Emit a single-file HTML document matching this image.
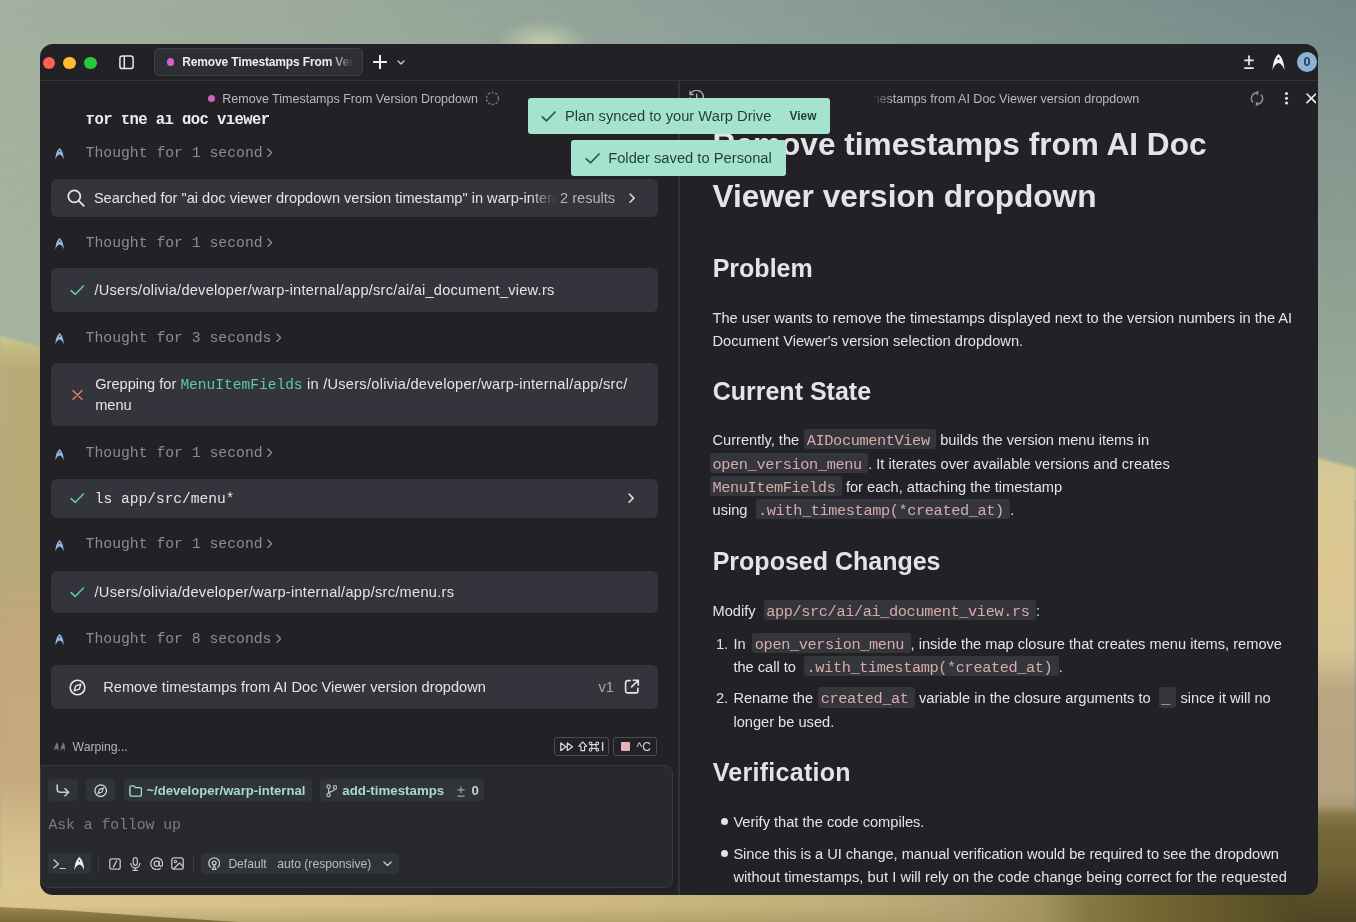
<!DOCTYPE html>
<html>
<head>
<meta charset="utf-8">
<title>Warp</title>
<style>
*{box-sizing:border-box;margin:0;padding:0}
html,body{width:1356px;height:922px;overflow:hidden;background:#9aa894}
body{font-family:"Liberation Sans",sans-serif;position:relative;color:#e4e4e7}
.abs{position:absolute}
.mono{font-family:"Liberation Mono",monospace}
/* ---------- wallpaper ---------- */
#wp{left:0;top:0;width:1356px;height:922px;overflow:hidden}
#wp div{position:absolute}
/* ---------- window ---------- */
#o{will-change:transform}
#win{left:40px;top:44px;width:1278px;height:851px;background:#212126;border-radius:13px;overflow:hidden}
.tl{width:12.5px;height:12.5px;border-radius:50%}
/* ---------- left pane ---------- */
.card{left:11px;width:607px;background:#34353c;border-radius:6px}
.thought{left:45px;font:14.75px "Liberation Mono",monospace;color:#8b8c90;white-space:pre;height:18px;line-height:18px}
.ct{font-size:14.6px;color:#e4e4e7;white-space:pre;line-height:21px}
/* ---------- right pane ---------- */
.h1{left:713px;font-weight:700;font-size:31.6px;color:#e3e3e8;white-space:pre;line-height:40px;height:40px}
.h2{left:712.7px;font-weight:700;font-size:25px;color:#e3e3e8;white-space:pre;line-height:30px;height:30px}
.p{left:712.5px;z-index:0;font-size:14.64px;color:#e4e4e7;white-space:pre;line-height:20px;height:20px}
.p.li{left:733.4px}
.bul{left:720.8px;width:7px;height:7px;border-radius:50%;background:#e4e4e7}
code{position:relative;font:15.3px "Liberation Mono",monospace;letter-spacing:-.4px;color:#d8abab;padding:0 6.4px 0 2.5px;margin-left:4px}
code::before{content:"";position:absolute;left:0;right:0;top:-3px;bottom:.9px;background:#35363c;border-radius:3px;z-index:-1}
code.s{margin-left:-2.5px}
.chip{background:#31333a;border-radius:4px}
.toast{background:#a6e3cf;border-radius:3px;height:35.5px;color:#1f3f38;font-size:14.75px;line-height:35.5px;white-space:pre}
</style>
</head>
<body>
<!-- WALLPAPER -->
<div id="wp" class="abs">
  <!-- sky -->
  <div style="left:0;top:0;width:1356px;height:922px;background:linear-gradient(90deg,#a2b19f 0,#9cab9b 300px,#8ea199 680px,#82968f 1000px,#74898a 1356px)"></div>
  <div style="left:0;top:0;width:1356px;height:500px;background:linear-gradient(180deg,rgba(180,192,160,0) 0,rgba(180,192,160,.08) 50px,rgba(180,192,160,.2) 100px,rgba(180,192,160,.62) 440px,rgba(180,192,160,.65) 500px);-webkit-mask-image:linear-gradient(90deg,rgba(0,0,0,.45) 0,#000 100%);mask-image:linear-gradient(90deg,rgba(0,0,0,.45) 0,#000 100%)"></div>
  <!-- cloud puff above window -->
  <div style="left:500px;top:20px;width:88px;height:34px;background:radial-gradient(ellipse at 48% 72%,rgba(203,208,172,.92) 0,rgba(190,199,168,.55) 38%,rgba(160,175,160,0) 72%)"></div>
  <!-- land -->
  <div style="left:-10px;top:0;width:1376px;height:940px;filter:blur(1.6px)"><div style="left:10px;top:0;width:1356px;height:940px;clip-path:polygon(0 336px,40px 347px,1318px 458px,1356px 468px,1356px 940px,0 940px)">
    <div style="left:0;top:0;width:700px;height:922px;background:linear-gradient(180deg,#cdc890 336px,#c2b880 350px,#b9ab78 370px,#b8aa78 560px,#c3a67b 640px,#c6a97d 780px,#d3bb88 830px,#dcc892 895px)"></div>
    <div style="left:700px;top:0;width:656px;height:922px;background:linear-gradient(180deg,#cfc795 455px,#d6c996 480px,#dcc690 560px,#d8c594 650px,#b9a784 690px,#b5a382 790px,#a89873 808px)"></div>
  </div>
  </div>
  <!-- bottom band -->
  <div style="left:0;top:890px;width:1356px;height:32px;background:linear-gradient(90deg,#dbc68e 0,#d4c088 300px,#cdb980 600px,#bfae78 850px,#b3a373 960px,#a4955f 1040px,#857840 1090px,#756833 1150px,#63572c 1230px,#554926 1300px,#5b502a 1356px)"></div>
  <div style="left:0;top:890px;width:1100px;height:32px;background:linear-gradient(180deg,rgba(150,135,80,0) 50%,rgba(150,135,80,.4) 100%);-webkit-mask-image:linear-gradient(90deg,#000 0,#000 800px,rgba(0,0,0,0) 1100px);mask-image:linear-gradient(90deg,#000 0,#000 800px,rgba(0,0,0,0) 1100px)"></div>
  <div style="left:-20px;top:902px;width:330px;height:30px;filter:blur(2.5px);clip-path:polygon(0 4px,80px 8px,180px 15px,290px 22px,290px 30px,0 30px);background:linear-gradient(180deg,#a08d57 4px,#84723f 14px,#776536 24px)"></div>
  <!-- shrubs on right -->
  <div style="left:1280px;top:806px;width:76px;height:116px;background:linear-gradient(180deg,rgba(138,123,73,0) 0,#85774a 9px,#75683a 24px,#6d6033 60px,#5d512a 87px,#4f4426 116px);-webkit-mask-image:linear-gradient(90deg,rgba(0,0,0,0) 0,#000 34px);mask-image:linear-gradient(90deg,rgba(0,0,0,0) 0,#000 34px)"></div>
</div>
</div>

<!-- WINDOW -->
<svg width="0" height="0" style="position:absolute">
  <defs>
    <symbol id="oz" viewBox="0 0 13 16.5"><path fill-rule="evenodd" d="M6.5 0C9.6 2.6 12.1 7.4 12.5 16.4C11.3 12.6 9.2 9.6 6.5 9.1C3.8 9.6 1.7 12.6 .5 16.4C.9 7.4 3.4 2.6 6.5 0ZM6.5 3.6a1.05 1.05 0 1 0 0 2.1a1.05 1.05 0 1 0 0-2.1Z"/></symbol>
    <symbol id="chk" viewBox="0 0 15 11"><path d="M1 6L5.2 10L14 1" fill="none" stroke-width="1.7" stroke-linecap="round" stroke-linejoin="round"/></symbol>
    <symbol id="chev" viewBox="0 0 6 10"><path d="M1 1L5 5L1 9" fill="none" stroke-width="1.5" stroke-linecap="round" stroke-linejoin="round"/></symbol>
    <symbol id="compass" viewBox="0 0 17 17"><circle cx="8.5" cy="8.5" r="7.3" fill="none" stroke-width="1.6"/><path d="M11.9 5.1L10.2 10.2L5.1 11.9L6.8 6.8Z" fill="none" stroke-width="1.4" stroke-linejoin="round"/></symbol>
  </defs>
</svg>
<div id="win" class="abs"><div id="o" class="abs" style="left:-40px;top:-44px;width:1356px;height:922px">
  <!-- title bar -->
  <div class="abs" style="left:40px;top:80px;width:1278px;height:1px;background:#34353a"></div>
  <div class="abs tl" style="left:42.5px;top:56.6px;background:#fe5f57"></div>
  <div class="abs tl" style="left:63.3px;top:56.6px;background:#febc2e"></div>
  <div class="abs tl" style="left:84.3px;top:56.6px;background:#28c840"></div>
  <svg class="abs" style="left:119px;top:55px" width="15" height="14.5" viewBox="0 0 15 14.5"><rect x=".9" y=".9" width="13.2" height="12.7" rx="2.4" fill="none" stroke="#e8e8ea" stroke-width="1.5"/><path d="M5.3 1V13.5" stroke="#e8e8ea" stroke-width="1.5"/></svg>
  <div class="abs" style="left:154px;top:48px;width:208.5px;height:27.5px;background:#2e2f34;border:1px solid #3f4046;border-radius:5px"></div>
  <div class="abs" style="left:166.5px;top:58.3px;width:7.4px;height:7.4px;border-radius:50%;background:#d264c1"></div>
  <div class="abs" style="left:182.3px;top:53px;width:172px;height:18px;overflow:hidden;white-space:pre;font-weight:700;font-size:12px;line-height:18px;letter-spacing:-.15px;color:#ededf0;-webkit-mask-image:linear-gradient(90deg,#000 0,#000 147px,rgba(0,0,0,.05) 170px);mask-image:linear-gradient(90deg,#000 0,#000 147px,rgba(0,0,0,.05) 170px)">Remove Timestamps From Version</div>
  <svg class="abs" style="left:373px;top:55px" width="14" height="14" viewBox="0 0 14 14"><path d="M7 .6V13.4M.6 7H13.4" stroke="#f0f0f2" stroke-width="2" stroke-linecap="round"/></svg>
  <svg class="abs" style="left:397px;top:59.5px" width="8" height="5" viewBox="0 0 8 5"><path d="M1 1L4 4L7 1" fill="none" stroke="#d0d0d4" stroke-width="1.3" stroke-linecap="round" stroke-linejoin="round"/></svg>
  <svg class="abs" style="left:1243.5px;top:54.5px" width="10" height="14.5" viewBox="0 0 10 14.5"><path d="M5 .5V10.3M.3 5.4H9.7M.3 13.2H9.7" stroke="#ececee" stroke-width="1.7"/></svg>
  <svg class="abs" style="left:1271.6px;top:53.8px;fill:#f4f4f6" width="13" height="16.5"><use href="#oz"/></svg>
  <div class="abs" style="left:1296.6px;top:51.7px;width:20.6px;height:20.6px;border-radius:50%;background:#8fb2d3;color:#1b3a5c;font-weight:700;font-size:12.6px;line-height:20.8px;text-align:center">0</div>

  <!-- LEFT PANE -->
  <div id="lp">
  <!-- pane header -->
  <div class="abs" style="left:208px;top:94.9px;width:7.4px;height:7.4px;border-radius:50%;background:#d264c1"></div>
  <div class="abs" id="lph" style="left:222.3px;top:89.5px;font-size:12.5px;line-height:18px;color:#b9b9bd;white-space:pre">Remove Timestamps From Version Dropdown</div>
  <svg class="abs" style="left:485px;top:91px" width="15" height="15" viewBox="0 0 15 15"><circle cx="7.5" cy="7.5" r="6" fill="none" stroke="#77787d" stroke-width="1.5" stroke-dasharray="2.2 1.6"/></svg>
  <!-- clipped bold line -->
  <div class="abs" style="left:80px;top:115.2px;width:300px;height:14px;overflow:hidden"><div class="abs mono" id="bold1" style="left:5.7px;top:-4.2px;font-size:15.6px;letter-spacing:-.6px;font-weight:700;line-height:18px;color:#ececef;white-space:pre">for the ai doc viewer</div></div>
  <svg class="abs" style="left:55.4px;top:148.4px;fill:#8fb6e6" width="9.2" height="11.7"><use href="#oz"/></svg>
  <div class="abs thought" id="t1" style="left:85.6px;top:143.90px">Thought for 1 second</div>
  <svg class="abs" style="left:266.8px;top:148.1px;stroke:#8b8c90" width="5.6" height="9.4"><use href="#chev"/></svg>
  <div class="abs card" style="left:51.3px;top:178.8px;width:606.7px;height:37.8px"></div>
  <svg class="abs" style="left:67.2px;top:188.7px" width="18" height="18" viewBox="0 0 18 18"><circle cx="7.3" cy="7.3" r="6" fill="none" stroke="#e6e6e9" stroke-width="1.7"/><path d="M11.8 11.8L16.8 16.8" stroke="#e6e6e9" stroke-width="1.8" stroke-linecap="round"/></svg>
  <div class="abs ct" id="s1" style="left:93.9px;top:187.70px;width:462px;overflow:hidden;-webkit-mask-image:linear-gradient(90deg,#000 0,#000 436px,rgba(0,0,0,0) 462px);mask-image:linear-gradient(90deg,#000 0,#000 436px,rgba(0,0,0,0) 462px)">Searched for "ai doc viewer dropdown version timestamp" in warp-internal</div>
  <div class="abs ct" id="s2" style="left:560px;top:187.70px;color:#b4b4b8">2 results</div>
  <svg class="abs" style="left:629.4px;top:193px;stroke:#d5d5d8" width="6.2" height="10.2"><use href="#chev"/></svg>
  <svg class="abs" style="left:55.4px;top:238.3px;fill:#8fb6e6" width="9.2" height="11.7"><use href="#oz"/></svg>
  <div class="abs thought" id="t2" style="left:85.6px;top:233.80px">Thought for 1 second</div>
  <svg class="abs" style="left:266.8px;top:238.0px;stroke:#8b8c90" width="5.6" height="9.4"><use href="#chev"/></svg>
  <div class="abs card" style="left:51.3px;top:268.3px;width:606.7px;height:43.4px"></div>
  <svg class="abs" style="left:69.8px;top:285px;stroke:#5fc9a0" width="14.6" height="10.4"><use href="#chk"/></svg>
  <div class="abs ct" id="f1" style="left:94.5px;top:279.70px;letter-spacing:.24px">/Users/olivia/developer/warp-internal/app/src/ai/ai_document_view.rs</div>
  <svg class="abs" style="left:55.4px;top:333.1px;fill:#8fb6e6" width="9.2" height="11.7"><use href="#oz"/></svg>
  <div class="abs thought" id="t3" style="left:85.6px;top:328.60px">Thought for 3 seconds</div>
  <svg class="abs" style="left:275.6px;top:332.8px;stroke:#8b8c90" width="5.6" height="9.4"><use href="#chev"/></svg>
  <div class="abs card" style="left:51.3px;top:363.3px;width:606.7px;height:63.2px"></div>
  <svg class="abs" style="left:72px;top:390.4px" width="11" height="10" viewBox="0 0 11 10"><path d="M1 .8L10 9.2M10 .8L1 9.2" stroke="#e27d6c" stroke-width="1.5" stroke-linecap="round"/></svg>
  <div class="abs ct" id="g1" style="left:95.2px;top:374.00px">Grepping for <span class="mono" id="g2" style="font-size:14.55px;color:#5fcaa0">MenuItemFields</span><span id="g3" style="letter-spacing:.27px"> in /Users/olivia/developer/warp-internal/app/src/</span></div>
  <div class="abs ct" id="g4" style="left:95.2px;top:395.30px">menu</div>
  <svg class="abs" style="left:55.4px;top:448.5px;fill:#8fb6e6" width="9.2" height="11.7"><use href="#oz"/></svg>
  <div class="abs thought" id="t4" style="left:85.6px;top:444.00px">Thought for 1 second</div>
  <svg class="abs" style="left:266.8px;top:448.2px;stroke:#8b8c90" width="5.6" height="9.4"><use href="#chev"/></svg>
  <div class="abs card" style="left:51.3px;top:478.6px;width:606.7px;height:39.4px"></div>
  <svg class="abs" style="left:69.8px;top:493.2px;stroke:#5fc9a0" width="14.6" height="10.4"><use href="#chk"/></svg>
  <div class="abs mono" id="ls" style="left:94.8px;top:490.4px;font-size:14.55px;line-height:18px;color:#e4e4e7;white-space:pre">ls app/src/menu*</div>
  <svg class="abs" style="left:627.6px;top:493.3px;stroke:#e0e0e3" width="6.2" height="10.2"><use href="#chev"/></svg>
  <svg class="abs" style="left:55.4px;top:539.6px;fill:#8fb6e6" width="9.2" height="11.7"><use href="#oz"/></svg>
  <div class="abs thought" id="t5" style="left:85.6px;top:535.10px">Thought for 1 second</div>
  <svg class="abs" style="left:266.8px;top:539.3px;stroke:#8b8c90" width="5.6" height="9.4"><use href="#chev"/></svg>
  <div class="abs card" style="left:51.3px;top:570.7px;width:606.7px;height:42.6px"></div>
  <svg class="abs" style="left:69.8px;top:586.8px;stroke:#5fc9a0" width="14.6" height="10.4"><use href="#chk"/></svg>
  <div class="abs ct" id="f2" style="left:94.5px;top:581.60px;letter-spacing:.285px">/Users/olivia/developer/warp-internal/app/src/menu.rs</div>
  <svg class="abs" style="left:55.4px;top:634.2px;fill:#8fb6e6" width="9.2" height="11.7"><use href="#oz"/></svg>
  <div class="abs thought" id="t6" style="left:85.6px;top:629.70px">Thought for 8 seconds</div>
  <svg class="abs" style="left:275.6px;top:633.9px;stroke:#8b8c90" width="5.6" height="9.4"><use href="#chev"/></svg>
  <div class="abs card" style="left:51.3px;top:665px;width:606.7px;height:43.9px"></div>
  <svg class="abs" style="left:68.9px;top:679px;stroke:#e6e6e9" width="17" height="17"><use href="#compass"/></svg>
  <div class="abs ct" id="pl" style="left:103.2px;top:677.20px;letter-spacing:.035px">Remove timestamps from AI Doc Viewer version dropdown</div>
  <div class="abs ct" id="v1" style="left:598.5px;top:677.20px;color:#a9a9ad">v1</div>
  <svg class="abs" style="left:624px;top:679px" width="15.5" height="15.5" viewBox="0 0 15.5 15.5"><path d="M6.2 1.6H3.6A2 2 0 0 0 1.6 3.6V11.9A2 2 0 0 0 3.6 13.9H11.9A2 2 0 0 0 13.9 11.9V9.3" fill="none" stroke="#e6e6e9" stroke-width="1.6" stroke-linecap="round"/><path d="M9.3 1.2H14.3V6.2M14 1.5L7.6 7.9" fill="none" stroke="#e6e6e9" stroke-width="1.6" stroke-linecap="round" stroke-linejoin="round"/></svg>
  <!-- warping row -->
  <svg class="abs" style="left:53.6px;top:741.8px;fill:#77787d" width="12.5" height="10" viewBox="0 0 12.5 10"><g transform="skewX(-8)"><path d="M3.2 .3C4.3 2 5.4 5 5.6 9.6C4.9 8 4 6.8 3.2 6.6C2.4 6.8 1.6 8 1 9.6C1.1 5 2.2 2 3.2 .3Z"/><path d="M9.7 .3C10.8 2 11.9 5 12.1 9.6C11.4 8 10.5 6.8 9.7 6.6C8.9 6.8 8.1 8 7.5 9.6C7.6 5 8.7 2 9.7 .3Z"/></g></svg>
  <div class="abs" id="wr" style="left:72.6px;top:737.6px;font-size:12.2px;line-height:18px;color:#b2b2b6;white-space:pre">Warping...</div>
  <div class="abs" style="left:554.4px;top:736.8px;width:54.4px;height:19.2px;border:1px solid #4b4c52;border-radius:3px"></div>
  <svg class="abs" style="left:559.5px;top:741.6px" width="14" height="9.6" viewBox="0 0 14 9.6"><path d="M.8 .9L6 4.8L.8 8.7ZM7.3 .9L12.5 4.8L7.3 8.7Z" fill="none" stroke="#dcdce0" stroke-width="1.25" stroke-linejoin="round"/></svg>
  <svg class="abs" style="left:578px;top:741px" width="27" height="11" viewBox="0 0 27 11"><path d="M4.8 .9L.9 5.2H3V9.6H6.6V5.2H8.7Z" fill="none" stroke="#dcdce0" stroke-width="1.15" stroke-linejoin="round"/><path d="M13.8 3.6H18V7.4H13.8ZM13.8 3.6H12.6a1.3 1.3 0 1 1 1.2-1.3ZM18 3.6h1.2a1.3 1.3 0 1 0-1.2-1.3ZM13.8 7.4H12.6a1.3 1.3 0 1 0 1.2 1.3ZM18 7.4h1.2a1.3 1.3 0 1 1-1.2 1.3Z" fill="none" stroke="#dcdce0" stroke-width="1.05"/><path d="M24.6 1.1V9.9" stroke="#dcdce0" stroke-width="1.4"/></svg>
  <div class="abs" style="left:613.2px;top:736.8px;width:44.1px;height:19.2px;border:1px solid #4b4c52;border-radius:3px"></div>
  <div class="abs" style="left:620.5px;top:741.7px;width:9.5px;height:9.5px;background:#e6b1ba;border-radius:1px"></div>
  <div class="abs" style="left:636.6px;top:737.6px;font-size:12px;line-height:18px;color:#dcdce0;white-space:pre">^C</div>
  <!-- input box -->
  <div class="abs" style="left:39.7px;top:765.4px;width:633.6px;height:122.6px;background:#28292f;border:1px solid #393a41;border-radius:2px 8px 8px 10px"></div>
  <div class="abs chip" style="left:48px;top:779.1px;width:30.2px;height:22px"></div>
  <svg class="abs" style="left:56.3px;top:784.2px" width="14" height="12.5" viewBox="0 0 14 12.5"><path d="M1.2 1V5.2A3 3 0 0 0 4.2 8.2H12.4M9 4.6L12.6 8.2L9 11.8" fill="none" stroke="#c9c9cd" stroke-width="1.6" stroke-linecap="round" stroke-linejoin="round"/></svg>
  <div class="abs chip" style="left:86.4px;top:779.1px;width:28.4px;height:22px"></div>
  <svg class="abs" style="left:93.9px;top:784px;stroke:#d6d6da" width="13.4" height="13.4"><use href="#compass"/></svg>
  <div class="abs chip" style="left:123.5px;top:779.1px;width:188.8px;height:22px"></div>
  <svg class="abs" style="left:128.8px;top:784.7px" width="13.4" height="12" viewBox="0 0 13.4 12"><path d="M.9 2.4A1.5 1.5 0 0 1 2.4 .9H4.9L6.4 2.6H11A1.5 1.5 0 0 1 12.5 4.1V9.6A1.5 1.5 0 0 1 11 11.1H2.4A1.5 1.5 0 0 1 .9 9.6Z" fill="none" stroke="#a6dacb" stroke-width="1.4" stroke-linejoin="round"/></svg>
  <div class="abs" id="c3" style="left:146.4px;top:782px;font-weight:700;font-size:13.1px;line-height:18px;color:#a6dacb;white-space:pre">~/developer/warp-internal</div>
  <div class="abs chip" style="left:320.4px;top:779.1px;width:163.4px;height:22px"></div>
  <svg class="abs" style="left:325.6px;top:784.1px" width="11.6" height="13.6" viewBox="0 0 11.6 13.6"><circle cx="2.6" cy="2.6" r="1.7" fill="none" stroke="#b9b9bd" stroke-width="1.2"/><circle cx="2.6" cy="11" r="1.7" fill="none" stroke="#b9b9bd" stroke-width="1.2"/><circle cx="9" cy="3.4" r="1.7" fill="none" stroke="#b9b9bd" stroke-width="1.2"/><path d="M2.6 4.3V9.3M9 5.1C9 7.6 2.6 7 2.6 9.3" fill="none" stroke="#b9b9bd" stroke-width="1.2"/></svg>
  <div class="abs" id="c4" style="left:342.3px;top:782px;font-weight:700;font-size:13.3px;line-height:18px;color:#a6dacb;white-space:pre">add-timestamps</div>
  <svg class="abs" style="left:456.8px;top:786px" width="8" height="11" viewBox="0 0 8 11"><path d="M4 .4V7.2M.4 3.8H7.6M.4 10H7.6" stroke="#9fa0a5" stroke-width="1.25"/></svg>
  <div class="abs" style="left:471.4px;top:782px;font-weight:700;font-size:13.3px;line-height:18px;color:#c9c9cd;white-space:pre">0</div>
  <div class="abs mono" id="ask" style="left:48.4px;top:815.8px;font-size:14.72px;line-height:18px;color:#7c7d82;white-space:pre">Ask a follow up</div>
  <!-- bottom toolbar -->
  <div class="abs chip" style="left:48px;top:852.8px;width:42.8px;height:21.6px"></div>
  <svg class="abs" style="left:53px;top:858.6px" width="13" height="10.5" viewBox="0 0 13 10.5"><path d="M1 1L5.4 4.9L1 8.8M7.2 9.6H12.2" fill="none" stroke="#c9c9cd" stroke-width="1.4" stroke-linecap="round" stroke-linejoin="round"/></svg>
  <svg class="abs" style="left:73.6px;top:857px;fill:#f0f0f2" width="10.6" height="13.4"><use href="#oz"/></svg>
  <div class="abs" style="left:98px;top:854.5px;width:1px;height:18px;background:#3b3c43"></div>
  <svg class="abs" style="left:108.7px;top:857.6px" width="12" height="12" viewBox="0 0 12 12"><rect x=".8" y=".8" width="10.4" height="10.4" rx="2" fill="none" stroke="#c4c4c8" stroke-width="1.3"/><path d="M7.6 2.9L4.4 9.1" stroke="#c4c4c8" stroke-width="1.3" stroke-linecap="round"/></svg>
  <svg class="abs" style="left:130.4px;top:856.6px" width="10.6" height="14" viewBox="0 0 10.6 14"><rect x="3.3" y=".7" width="4" height="7.6" rx="2" fill="none" stroke="#c4c4c8" stroke-width="1.25"/><path d="M.8 6.3A4.5 4.5 0 0 0 9.8 6.3M5.3 10.9V13.2M3 13.3H7.6" fill="none" stroke="#c4c4c8" stroke-width="1.25" stroke-linecap="round"/></svg>
  <svg class="abs" style="left:149.5px;top:857px" width="13.4" height="13.4" viewBox="0 0 13.4 13.4"><circle cx="6.7" cy="6.7" r="2.5" fill="none" stroke="#c4c4c8" stroke-width="1.25"/><path d="M9.2 4.2V7.6A1.7 1.7 0 0 0 12.6 7.6V6.7A5.9 5.9 0 1 0 10.3 11.4" fill="none" stroke="#c4c4c8" stroke-width="1.25" stroke-linecap="round"/></svg>
  <svg class="abs" style="left:171px;top:857.2px" width="13" height="13" viewBox="0 0 13 13"><rect x=".8" y=".8" width="11.4" height="11.4" rx="2" fill="none" stroke="#c4c4c8" stroke-width="1.3"/><circle cx="4.4" cy="4.4" r="1.2" fill="none" stroke="#c4c4c8" stroke-width="1.1"/><path d="M2.4 12L8.4 6L12.2 9.4" fill="none" stroke="#c4c4c8" stroke-width="1.3" stroke-linejoin="round"/></svg>
  <div class="abs" style="left:192.8px;top:854.5px;width:1px;height:18px;background:#3b3c43"></div>
  <div class="abs chip" style="left:201.3px;top:852.8px;width:197.6px;height:21.6px"></div>
  <svg class="abs" style="left:207.6px;top:857.4px" width="12.4" height="13" viewBox="0 0 12.4 13"><path d="M2.6 10.2A5.4 5.4 0 1 1 9.8 10.2" fill="none" stroke="#c4c4c8" stroke-width="1.3" stroke-linecap="round"/><circle cx="6.2" cy="6" r="1.9" fill="none" stroke="#c4c4c8" stroke-width="1.3"/><path d="M4.2 12.4L6.2 8.4L8.2 12.4Z" fill="none" stroke="#c4c4c8" stroke-width="1.1" stroke-linejoin="round"/></svg>
  <div class="abs" id="m1" style="left:228.4px;top:854.6px;font-size:12.1px;line-height:18px;color:#bdbdc1;white-space:pre">Default</div>
  <div class="abs" id="m2" style="left:277.2px;top:854.6px;font-size:12.2px;line-height:18px;color:#bdbdc1;white-space:pre">auto (responsive)</div>
  <svg class="abs" style="left:382.6px;top:861.4px" width="9" height="5.6" viewBox="0 0 9 5.6"><path d="M.9 .9L4.5 4.5L8.1 .9" fill="none" stroke="#c4c4c8" stroke-width="1.4" stroke-linecap="round" stroke-linejoin="round"/></svg>
</div>
  <!-- divider -->
  <div class="abs" style="left:678px;top:81px;width:2px;height:814px;background:#323339"></div>
  <!-- RIGHT PANE -->
  <div id="rp">
  <!-- pane header -->
  <svg class="abs" style="left:688.6px;top:90.3px" width="15.4" height="15.4" viewBox="0 0 15.4 15.4"><path d="M1.6 4.1A6.7 6.7 0 1 1 1 7.7" fill="none" stroke="#a9a9ad" stroke-width="1.4" stroke-linecap="round"/><path d="M1.1 1.3V4.6H4.4" fill="none" stroke="#a9a9ad" stroke-width="1.4" stroke-linecap="round" stroke-linejoin="round"/><path d="M7.7 4.2V7.9L10 9.3" fill="none" stroke="#a9a9ad" stroke-width="1.4" stroke-linecap="round"/></svg>
  <div class="abs" style="left:840px;top:89.5px;width:300px;height:18px;overflow:hidden;-webkit-mask-image:linear-gradient(90deg,rgba(0,0,0,0) 33px,#000 52px);mask-image:linear-gradient(90deg,rgba(0,0,0,0) 33px,#000 52px)"><div class="abs" id="rph" style="right:.8px;top:0;font-size:12.5px;line-height:18px;color:#b9b9bd;white-space:pre">Remove timestamps from AI Doc Viewer version dropdown</div></div>
  <svg class="abs" style="left:1250px;top:90px" width="14" height="17" viewBox="0 0 14 17"><path d="M6.2 2.95A5.6 5.6 0 0 0 3.1 12.5M7.8 14.05A5.6 5.6 0 0 0 10.9 4.5" fill="none" stroke="#8c8d92" stroke-width="1.5"/><path d="M4.6 3L8.2 .5V5.5ZM9.4 14L5.8 11.5V16.5Z" fill="#8c8d92"/></svg>
  <div class="abs" style="left:1284.6px;top:92.4px;width:3px;height:3px;border-radius:50%;background:#e9e9ec;box-shadow:0 4.75px 0 #e9e9ec,0 9.5px 0 #e9e9ec"></div>
  <svg class="abs" style="left:1305.6px;top:93.4px" width="10.6" height="10.6" viewBox="0 0 10.6 10.6"><path d="M1 1L9.6 9.6M9.6 1L1 9.6" stroke="#f0f0f2" stroke-width="1.6" stroke-linecap="round"/></svg>
  <!-- document -->
  <div class="abs h1" id="h1a" style="left:712.6px;top:123.75px">Remove timestamps from AI Doc</div>
  <div class="abs h1" id="h1b" style="left:712.6px;top:175.95px">Viewer version dropdown</div>
  <div class="abs h2" id="h2a" style="top:252.54px">Problem</div>
  <div class="abs p" id="p1a" style="top:307.63px;">The user wants to remove the timestamps displayed next to the version numbers in the AI</div>
  <div class="abs p" id="p1b" style="top:331.03px;">Document Viewer's version selection dropdown.</div>
  <div class="abs h2" id="h2b" style="top:375.94px">Current State</div>
  <div class="abs p" id="p2a" style="top:429.83px;">Currently, the <code style="margin-left:1px">AIDocumentView</code> builds the version menu items in</div>
  <div class="abs p" id="p2b" style="top:453.73px;"><code class="s">open_version_menu</code>. It iterates over available versions and creates</div>
  <div class="abs p" id="p2c" style="top:477.33px;"><code class="s">MenuItemFields</code> for each, attaching the timestamp</div>
  <div class="abs p" id="p2d" style="top:500.33px;">using <code>.with_timestamp(*created_at)</code>.</div>
  <div class="abs h2" id="h2c" style="top:545.64px">Proposed Changes</div>
  <div class="abs p" id="p3a" style="top:601.08px;">Modify <code>app/src/ai/ai_document_view.rs</code>:</div>
  <div class="abs p" id="n1" style="top:633.78px;left:715.9px">1.</div>
  <div class="abs p li" id="l1a" style="top:633.78px;">In <code style="margin-left:2.7px">open_version_menu</code>, inside the map closure that creates menu items, remove</div>
  <div class="abs p li" id="l1b" style="top:657.23px;">the call to <code>.with_timestamp(*created_at)</code>.</div>
  <div class="abs p" id="n2" style="top:688.43px;left:715.9px">2.</div>
  <div class="abs p li" id="l2a" style="top:688.43px;">Rename the <code style="margin-left:1.1px">created_at</code> variable in the closure arguments to <code>_</code> since it will no</div>
  <div class="abs p li" id="l2b" style="top:711.83px;">longer be used.</div>
  <div class="abs h2" id="h2d" style="top:757.44px;letter-spacing:.28px">Verification</div>
  <div class="abs bul" style="top:818.4px"></div>
  <div class="abs p li" id="b1" style="top:811.53px;">Verify that the code compiles.</div>
  <div class="abs bul" style="top:850px"></div>
  <div class="abs p li" id="b2a" style="top:843.53px;letter-spacing:-.03px;">Since this is a UI change, manual verification would be required to see the dropdown</div>
  <div class="abs p li" id="b2b" style="top:866.93px;letter-spacing:.045px;">without timestamps, but I will rely on the code change being correct for the requested</div>
  <div class="abs p li" id="b2c" style="top:890.33px;">scope.</div>
</div>
  <!-- TOASTS -->
  <div id="toasts">
  <div class="abs toast" style="left:528.3px;top:98px;width:301.4px"></div>
  <svg class="abs" style="left:541.4px;top:110.8px;stroke:#28584c" width="15.4" height="10.8"><use href="#chk"/></svg>
  <div class="abs" id="to1" style="left:565px;top:106.6px;font-size:14.72px;line-height:18px;color:#1f3f38;white-space:pre">Plan synced to your Warp Drive</div>
  <div class="abs" id="to1v" style="left:789.5px;top:106.9px;font-weight:700;font-size:11.9px;line-height:18px;color:#1f3f38;white-space:pre">View</div>
  <div class="abs toast" style="left:571.4px;top:140.4px;width:214.9px"></div>
  <svg class="abs" style="left:584.8px;top:153.2px;stroke:#28584c" width="15.4" height="10.8"><use href="#chk"/></svg>
  <div class="abs" id="to2" style="left:608.2px;top:149px;font-size:14.72px;line-height:18px;color:#1f3f38;white-space:pre">Folder saved to Personal</div>
</div>
</div></div>
</body>
</html>
